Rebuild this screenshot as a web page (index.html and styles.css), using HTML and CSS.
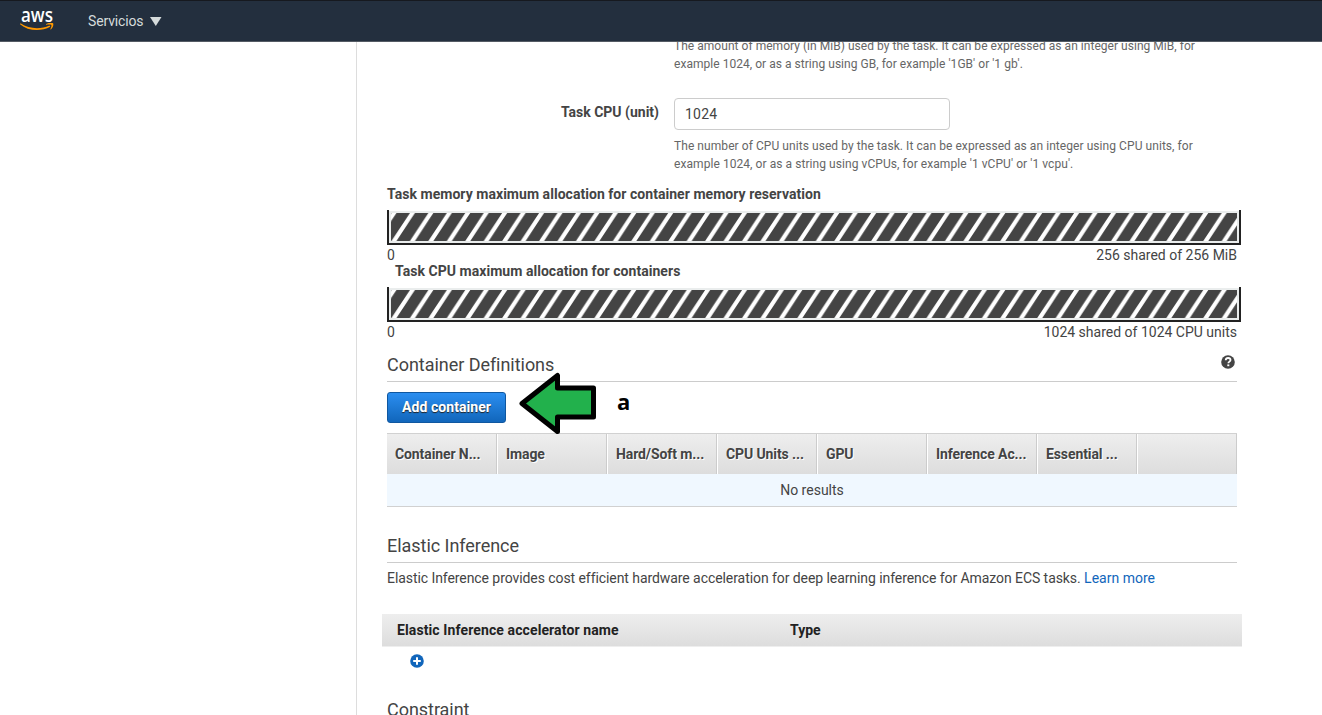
FILE: index.html
```html
<!DOCTYPE html>
<html lang="es">
<head>
<meta charset="utf-8">
<title>Task Definition</title>
<link rel="stylesheet" href="styles.css">
</head>
<body>
<header class="topbar">
  <div class="logo">
    <span class="logo-text">aws</span>
    <svg class="logo-smile" width="34" height="9" viewBox="0 0 34 9"><path d="M.5.3C9 6 20.500 6.600 29.500 2.500l.8 1.300C21 8.600 8 8.200 0 1.200z" fill="#f90"/><path d="M26.200 1c2-1.400 5.900-1.500 6.800-.8.800.9.200 4.500-2.100 6.200-.5.100-.6-.1-.4-.6.5-1.500 1.200-3 .8-3.700-.5-.8-3.300-.5-4.900-.4-.5 0-.6-.3-.2-.7z" fill="#f90"/></svg>
  </div>
  <nav class="services">Servicios <svg width="12" height="9" viewBox="0 0 12 9"><path d="M0 0h11.500L5.800 9z" fill="#d5dbdb"/></svg></nav>
</header>
<div class="page">
  <aside class="side"></aside>
  <main class="content">
    <div class="hint hint-memory">The amount of memory (in MiB) used by the task. It can be expressed as an integer using MiB, for<br>example 1024, or as a string using GB, for example '1GB' or '1 gb'.</div>
    <div class="field">
      <label class="field-label" for="cpu">Task CPU (unit)</label>
      <input class="field-input" id="cpu" type="text" value="1024">
    </div>
    <div class="hint hint-cpu">The number of CPU units used by the task. It can be expressed as an integer using CPU units, for<br>example 1024, or as a string using vCPUs, for example '1 vCPU' or '1 vcpu'.</div>

    <section class="allocation">
      <h4 class="allocation-title">Task memory maximum allocation for container memory reservation</h4>
      <div class="gauge"><svg class="gauge-fill" width="846" height="28"><defs><pattern id="hatch" width="18.45" height="28" patternUnits="userSpaceOnUse" x="1.300"><path d="M-.8 28L17.650 0h5L4.200 28zM-19.250 28L-.8 0h5l-18.450 28zM17.650 28L36.100 0h5L22.650 28z" fill="#fff"/></pattern></defs><rect width="846" height="28" fill="#444"/><rect width="846" height="28" fill="url(#hatch)"/></svg></div>
      <div class="scale"><span>0</span><span>256 shared of 256 MiB</span></div>
    </section>
    <section class="allocation">
      <h4 class="allocation-title indented">Task CPU maximum allocation for containers</h4>
      <div class="gauge"><svg class="gauge-fill" width="846" height="28"><rect width="846" height="28" fill="#444"/><rect width="846" height="28" fill="url(#hatch)"/></svg></div>
      <div class="scale"><span>0</span><span>1024 shared of 1024 CPU units</span></div>
    </section>

    <div class="heading heading-containers">
      <h2>Container Definitions</h2>
      <svg class="help" width="14" height="14" viewBox="0 0 14 14"><circle cx="7" cy="7" r="6.800" fill="#444"/><path d="M4.700 5.200C4.800 3.700 5.700 3 7.100 3c1.400 0 2.400.8 2.400 2 0 1.600-2.200 1.700-2.200 3.300" fill="none" stroke="#fff" stroke-width="1.800"/><path d="M6.300 9.400h2v1.800h-2z" fill="#fff"/></svg>
    </div>
    <div class="actions">
      <button class="add-button">Add container</button>
      <div class="callout">
        <svg width="78" height="64" viewBox="0 0 78 64"><path d="M3 31.500L38.500 3.500v12.500h36v29h-36V59.500z" fill="#22b14c" stroke="#000" stroke-width="5" stroke-linejoin="round"/></svg>
        <span class="callout-text">a</span>
      </div>
    </div>
    <div class="grid">
      <div class="grid-head">
        <div>Container N...</div><div>Image</div><div>Hard/Soft m...</div><div>CPU Units ...</div><div>GPU</div><div>Inference Ac...</div><div>Essential ...</div><div></div>
      </div>
      <div class="grid-empty">No results</div>
    </div>

    <div class="heading heading-elastic"><h2>Elastic Inference</h2></div>
    <p class="description"><span class="description-text">Elastic Inference provides cost efficient hardware acceleration for deep learning inference for Amazon ECS tasks.</span> <a class="link" href="#">Learn more</a></p>
    <div class="accelerators"><div class="accelerator-name">Elastic Inference accelerator name</div><div>Type</div></div>
    <svg class="plus" width="14" height="14" viewBox="0 0 14 14"><circle cx="7" cy="7" r="6.800" fill="#1166bb"/><path d="M7 3.200v7.600M3.200 7h7.600" stroke="#fff" stroke-width="2"/></svg>
    <div class="heading heading-constraint"><h2>Constraint</h2></div>
  </main>
</div>
</body>
</html>
```
FILE: styles.css
```css
* { box-sizing: border-box; }
html, body { margin: 0; height: 715px; overflow: hidden; }
body { background: #fff; color: #444; font: 14px/18px Roboto, sans-serif; }
h2, h4, p { margin: 0; }

.topbar { display: flex; height: 42px; background: #232f3e; border-top: 1px solid #16191f; border-bottom: 1px solid #545b64; }
.logo { width: 66px; padding-left: 20px; height: 40px; }
.logo-text { display: block; margin: 6px 0 0 1px; height: 16px; color: #fff; font: 600 19.5px/16px "Open Sans", sans-serif; transform: scaleX(.87); transform-origin: left; }
.logo-smile { display: block; }
.services { margin-left: 22px; color: #d5dbdb; line-height: 40px; letter-spacing: -.15px; }
.services svg { margin-left: 3px; }

.page { display: flex; height: 673px; overflow: hidden; }
.side { width: 357px; flex: none; border-right: 1px solid #ddd; }
.content { width: 880px; flex: none; padding-left: 30px; }

.hint { padding-left: 287px; color: #666; font-size: 12px; line-height: 18px; white-space: nowrap; }
.hint-memory { margin-top: -5px; letter-spacing: .035px; }
.hint-cpu { margin-top: 7px; letter-spacing: .065px; }
.field { display: flex; margin-top: 25px; height: 32px; }
.field-label { width: 272px; margin-right: 15px; padding-top: 5px; text-align: right; font-weight: 700; }
.field-input { width: 276px; height: 32px; padding: 0 10px; border: 1px solid #ccc; border-radius: 4px; background: #fff; color: #444; font: 14px Roboto, sans-serif; letter-spacing: .2px; outline: 0; }

.allocation { height: 77px; }
.hint-cpu + .allocation { margin-top: 12px; }
.allocation-title { height: 25px; font-size: 14px; font-weight: 700; line-height: 18px; letter-spacing: .04px; }
.indented { padding-left: 8px; }
.gauge { width: 854px; height: 35px; padding: 3px 2px 0; border: 2px solid #222; border-top: 0; background: linear-gradient(#eaeded, #eaeded) 0 1px no-repeat; }
.gauge-fill { display: block; }
.scale { display: flex; justify-content: space-between; line-height: 18px; margin-top: 1px; }

.heading { border-bottom: 1px solid #ccc; display: flex; justify-content: space-between; }
.heading h2 { font-size: 18px; line-height: 24px; font-weight: 400; letter-spacing: -.04px; }
.heading-containers { height: 43px; padding-top: 14px; }
.help { margin: 2px 2px 0 0; }
.actions { display: flex; height: 51px; padding-top: 10px; }
.add-button { width: 119px; height: 31px; padding: 0 0 1px; border: 1px solid #0f57a0; border-radius: 3px; background: linear-gradient(#2b8ef0, #1166bb); color: #fff; font: 700 14px Roboto, sans-serif; letter-spacing: .06px; text-shadow: 0 1px 1px #222; }
.callout { display: flex; margin: -20px 0 -4px 13px; height: 64px; z-index: 1; }
.callout-text { margin: 17px 0 0 20px; color: #000; font: 700 22px/24px "Open Sans", sans-serif; }

.grid { height: 74px; border-top: 1px solid #d1d1d1; border-bottom: 1px solid #d1d1d1; }
.grid-head { display: grid; grid-template-columns: 110px 110px 110px 100px 110px 110px 100px 100px; height: 40px; background: linear-gradient(#eee, #ddd); line-height: 40px; font-weight: 700; letter-spacing: -.1px; text-shadow: 1px 1px 0 #fff; }
.grid-head div { padding-left: 8px; border-right: 1px solid #ccc; white-space: nowrap; }
.grid-head div + div { border-left: 1px solid #fff; }
.grid-empty { height: 32px; line-height: 32px; text-align: center; background: #f0f8ff; }

.heading-elastic { height: 56px; padding-top: 27px; }
.description { margin-top: 6px; white-space: nowrap; }
.description-text { letter-spacing: -.072px; }
.link { color: #1166bb; text-decoration: none; }
.accelerators { display: grid; grid-template-columns: 393px 1fr; width: 860px; height: 33px; margin: 27px 0 0 -5px; padding-left: 15px; border-bottom: 1px solid #eee; background: linear-gradient(#eee, #ddd); color: #222; font-weight: 700; line-height: 32px; }
.accelerator-name { letter-spacing: .11px; }
.plus { display: block; margin: 7px 0 0 23px; }
.heading-constraint { margin-top: 30px; }
```
